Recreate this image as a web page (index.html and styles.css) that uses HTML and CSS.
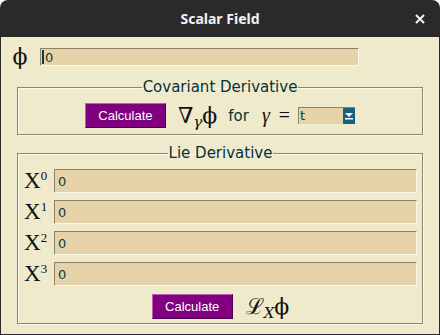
FILE: index.html
```html
<!DOCTYPE html>
<html lang="en">

<head>
    <meta charset="UTF-8">
    <title>Scalar Field</title>
    <link rel="stylesheet" href="styles.css">
</head>

<body>
    <div class="window">
        <div class="titlebar">
            <span class="title">Scalar Field</span>
            <svg class="close" width="10" height="10" viewBox="0 0 10 10">
                <path d="M1 1 L9 9 M9 1 L1 9" stroke="#f0f0f0" stroke-width="2"/>
            </svg>
        </div>
        <div class="content">
            <div class="phi-row">
                <span class="math phi">ϕ</span>
                <div class="entry phi-entry"><span class="cursor"></span>0</div>
            </div>

            <fieldset class="group cov">
                <legend>Covariant Derivative</legend>
                <div class="action-row">
                    <button class="calc">Calculate</button>
                    <span class="math nabla">∇<sub>γ</sub>ϕ</span>
                    <span class="word">for</span>
                    <span class="math gamma"><i>γ</i> =</span>
                    <div class="select">
                        <span class="select-text">t</span>
                        <span class="select-arrow">
                            <svg width="8" height="7" viewBox="0 0 8 7">
                                <path d="M0 0 H8 L4 4 Z" fill="#fff"/>
                                <rect x="0" y="5" width="8" height="1.5" fill="#fff"/>
                            </svg>
                        </span>
                    </div>
                </div>
            </fieldset>

            <fieldset class="group lie">
                <legend>Lie Derivative</legend>
                <div class="x-row"><span class="math xlabel">X<sup>0</sup></span><div class="entry">0</div></div>
                <div class="x-row"><span class="math xlabel">X<sup>1</sup></span><div class="entry">0</div></div>
                <div class="x-row"><span class="math xlabel">X<sup>2</sup></span><div class="entry">0</div></div>
                <div class="x-row"><span class="math xlabel">X<sup>3</sup></span><div class="entry">0</div></div>
                <div class="action-row lie-action">
                    <button class="calc">Calculate</button>
                    <span class="math lie-sym">ℒ<sub>X</sub>ϕ</span>
                </div>
            </fieldset>
        </div>
    </div>
</body>

</html>
```

FILE: styles.css
```css
body {
    margin: 0;
    background-color: #ffffff;
    font-family: "DejaVu Sans", sans-serif;
}

.window {
    width: 440px;
    height: 335px;
    box-sizing: border-box;
    border-radius: 8px 8px 0 0;
    background-color: #2a2a2a;
    overflow: hidden;
    display: flex;
    flex-direction: column;
}

.titlebar {
    height: 37px;
    flex-shrink: 0;
    display: flex;
    align-items: center;
    justify-content: center;
    position: relative;
}

.title {
    color: #f2f2f2;
    font-family: "Noto Sans", sans-serif;
    font-weight: bold;
    font-size: 14px;
}

.close {
    position: absolute;
    right: 15px;
    top: 14px;
}

.content {
    flex-grow: 1;
    margin: 0 1px 1px 1px;
    background-color: #eeeacb;
    padding-top: 11px;
}

.math {
    font-family: "DejaVu Serif", serif;
    color: #111;
}

.phi-row {
    display: flex;
    align-items: center;
    height: 18px;
}

.phi {
    font-size: 22px;
    width: 40px;
    text-align: center;
    margin-left: -1px;
    line-height: 18px;
}

.entry {
    height: 24px;
    box-sizing: border-box;
    flex-grow: 1;
    background-color: #e6d3a9;
    border-top: 1px solid #8a8365;
    border-left: 1px solid #8a8365;
    border-bottom: 1px solid #faf8ea;
    border-right: 1px solid #faf8ea;
    color: #0b3a3a;
    font-size: 13px;
    padding-left: 3px;
    display: flex;
    align-items: center;
}

.phi-entry {
    height: 18px;
    flex-grow: 0;
    width: 319px;
    padding-left: 1px;
}

.cursor {
    display: inline-block;
    width: 2px;
    height: 14px;
    background-color: #0b3a3a;
    margin-right: 1px;
}

.group {
    margin: 0 16px;
    padding: 0;
    border: 1px solid #8a8670;
    box-shadow: inset 1px 1px 0 #fbf9ee, 1px 1px 0 #fbf9ee;
    min-width: 0;
}

.group legend {
    margin: 0 auto;
    padding: 0 1px;
    font-size: 15px;
    line-height: 18px;
    height: 18px;
    color: #053333;
}

.cov {
    margin-top: 12px;
    padding: 7px 0 6px 0;
}

.lie {
    margin-top: 9px;
    padding: 7px 5px 4px 6px;
}

.action-row {
    display: flex;
    align-items: center;
    justify-content: center;
    height: 25px;
}

.calc {
    height: 25px;
    width: 81px;
    padding: 0;
    background-color: #800080;
    color: #ffffff;
    font-family: "Liberation Sans", Arial, sans-serif;
    font-size: 13px;
    border-top: 1px solid #b860b8;
    border-left: 1px solid #b860b8;
    border-bottom: 1px solid #4a004a;
    border-right: 1px solid #4a004a;
}

.nabla {
    font-size: 22px;
    margin-left: 12px;
    line-height: 25px;
}

.math sub {
    font-size: 15px;
    font-style: italic;
    vertical-align: -4px;
    line-height: 0;
}

.word {
    font-size: 15px;
    color: #053333;
    margin-left: 11px;
}

.gamma {
    font-family: "Liberation Serif", serif;
    font-size: 20px;
    line-height: 25px;
    margin-left: 13px;
    word-spacing: 4px;
}

.select {
    margin-left: 8px;
    width: 57px;
    height: 17px;
    box-sizing: border-box;
    display: flex;
    background-color: #e6d3a9;
    border-top: 1px solid #8a8365;
    border-left: 1px solid #8a8365;
}

.select-text {
    flex-grow: 1;
    font-size: 13px;
    color: #0b3a3a;
    line-height: 16px;
    padding-left: 1px;
}

.select-arrow {
    width: 12px;
    background-color: #15607e;
    display: flex;
    align-items: center;
    justify-content: center;
}

.x-row {
    display: flex;
    align-items: center;
    height: 24px;
    margin-bottom: 7px;
}

.xlabel {
    width: 30px;
    font-family: "Liberation Serif", serif;
    font-size: 23px;
    line-height: 24px;
}

.xlabel sup {
    font-size: 13px;
    vertical-align: 8px;
    line-height: 0;
}

.lie-action {
    margin-top: 8px;
}

.lie-sym {
    font-size: 22px;
    line-height: 25px;
    margin-left: 13px;
}
```
